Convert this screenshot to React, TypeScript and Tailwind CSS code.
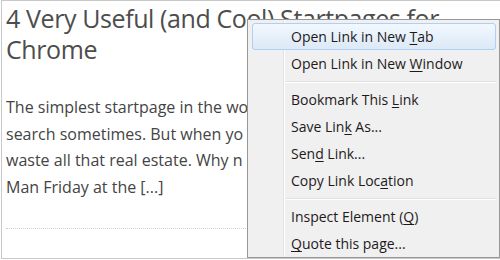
import React from "react";

type Item = { pre: string; key: string; post: string; hl?: boolean } | "sep";

const items: Item[] = [
  { pre: "Open Link in New ", key: "T", post: "ab", hl: true },
  { pre: "Open Link in New ", key: "W", post: "indow" },
  "sep",
  { pre: "Bookmark This ", key: "L", post: "ink" },
  { pre: "Save Lin", key: "k", post: " As..." },
  { pre: "Sen", key: "d", post: " Link..." },
  { pre: "Copy Link Loc", key: "a", post: "tion" },
  "sep",
  { pre: "Inspect Element (", key: "Q", post: ")" },
  { pre: "", key: "Q", post: "uote this page..." },
];

export default function App() {
  return (
    <div
      className="relative w-[500px] h-[260px] overflow-hidden bg-white"
      style={{ fontFamily: '"Open Sans", "Noto Sans", sans-serif' }}
    >
      <div className="absolute left-[1px] top-0 w-[520px] h-[259px] border border-[#c9c9c9]" />
      <div className="pl-[6px] pt-[3px] text-[#4d4d4d]">
        <h1 className="text-[25px] leading-[31px] tracking-[-0.4px] font-normal">
          4 Very Useful (and Cool) Startpages for
          <br />
          Chrome
        </h1>
        <div className="mt-[29px] w-[241px] overflow-hidden">
          <p className="text-[16px] leading-[26.5px] text-[#444] whitespace-nowrap">
            The simplest startpage in the wo
            <br />
            search sometimes. But when yo
            <br />
            waste all that real estate. Why n
            <br />
            Man Friday at the [...]
          </p>
        </div>
        <div className="mt-[28px] w-[480px] border-t border-dotted border-[#cfcfcf]" />
      </div>

      <div className="absolute left-[247px] top-[19px] w-[253px] h-[239px] bg-[#f0f0f0] border border-[#979797] pt-[3px] pl-[4px] pr-[3px] text-[14px] text-[#1e1a1c]">
        <div className="absolute left-[35px] top-0 bottom-0 w-[1px] bg-[#e2e3e3]" />
        <div className="absolute left-[36px] top-0 bottom-0 w-[1px] bg-white" />
        {items.map((it, i) =>
          it === "sep" ? (
            <div key={i} className="h-[9px] flex flex-col justify-center pl-[34px]">
              <div className="h-[1px] bg-[#e0e0e0]" />
              <div className="h-[1px] bg-white" />
            </div>
          ) : (
            <div
              key={i}
              className={
                "relative h-[27px] flex items-center pl-[38px] rounded-[3px] border " +
                (it.hl
                  ? "border-[#aecff7] bg-gradient-to-b from-[#f2f8fe] to-[#dde9f7]"
                  : "border-transparent")
              }
            >
              <span>
                {it.pre}
                <span className="underline underline-offset-2">{it.key}</span>
                {it.post}
              </span>
            </div>
          )
        )}
      </div>
    </div>
  );
}
